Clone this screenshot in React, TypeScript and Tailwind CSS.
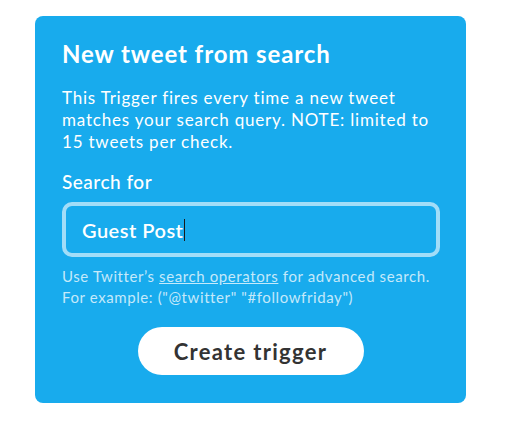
import React from "react";

export default function App() {
  return (
    <div className="min-h-[432px] w-[509px] bg-white pt-[16px] pl-[35px]" style={{ fontFamily: "Lato, 'Noto Sans', sans-serif" }}>
      <div className="w-[431px] rounded-[8px] bg-[#18abed] px-[27px] pt-[24px] pb-[28px] text-white">
        <h1 className="text-[24px] font-bold leading-[28px] tracking-[0.9px]">New tweet from search</h1>
        <p className="mt-[19px] text-[17px] leading-[22px] tracking-[0.8px]">
          This Trigger fires every time a new tweet matches your search query. NOTE: limited to 15 tweets per check.
        </p>
        <div className="mt-[17px] text-[19px] font-medium leading-[24px] tracking-[0.5px]">Search for</div>
        <div className="mt-[8px] flex h-[55px] w-[378px] items-center rounded-[10px] border-[4px] border-white/60 px-[16px]">
          <span className="text-[20px] font-semibold leading-[24px] tracking-[0.5px]">Guest Post</span>
          <span className="ml-[1px] inline-block h-[22px] w-[1px] bg-[#1a1a1a]"></span>
        </div>
        <p className="mt-[9px] text-[15px] leading-[21px] tracking-[0.6px] text-white/75">
          Use Twitter’s <span className="underline">search operators</span> for advanced search.
          <br />
          For example: ("@twitter" "#followfriday")
        </p>
        <div className="mt-[19px] flex justify-center">
          <button className="h-[48px] w-[226px] rounded-full bg-white text-[22px] font-bold tracking-[1.3px] text-[#333333]">
            Create trigger
          </button>
        </div>
      </div>
    </div>
  );
}
